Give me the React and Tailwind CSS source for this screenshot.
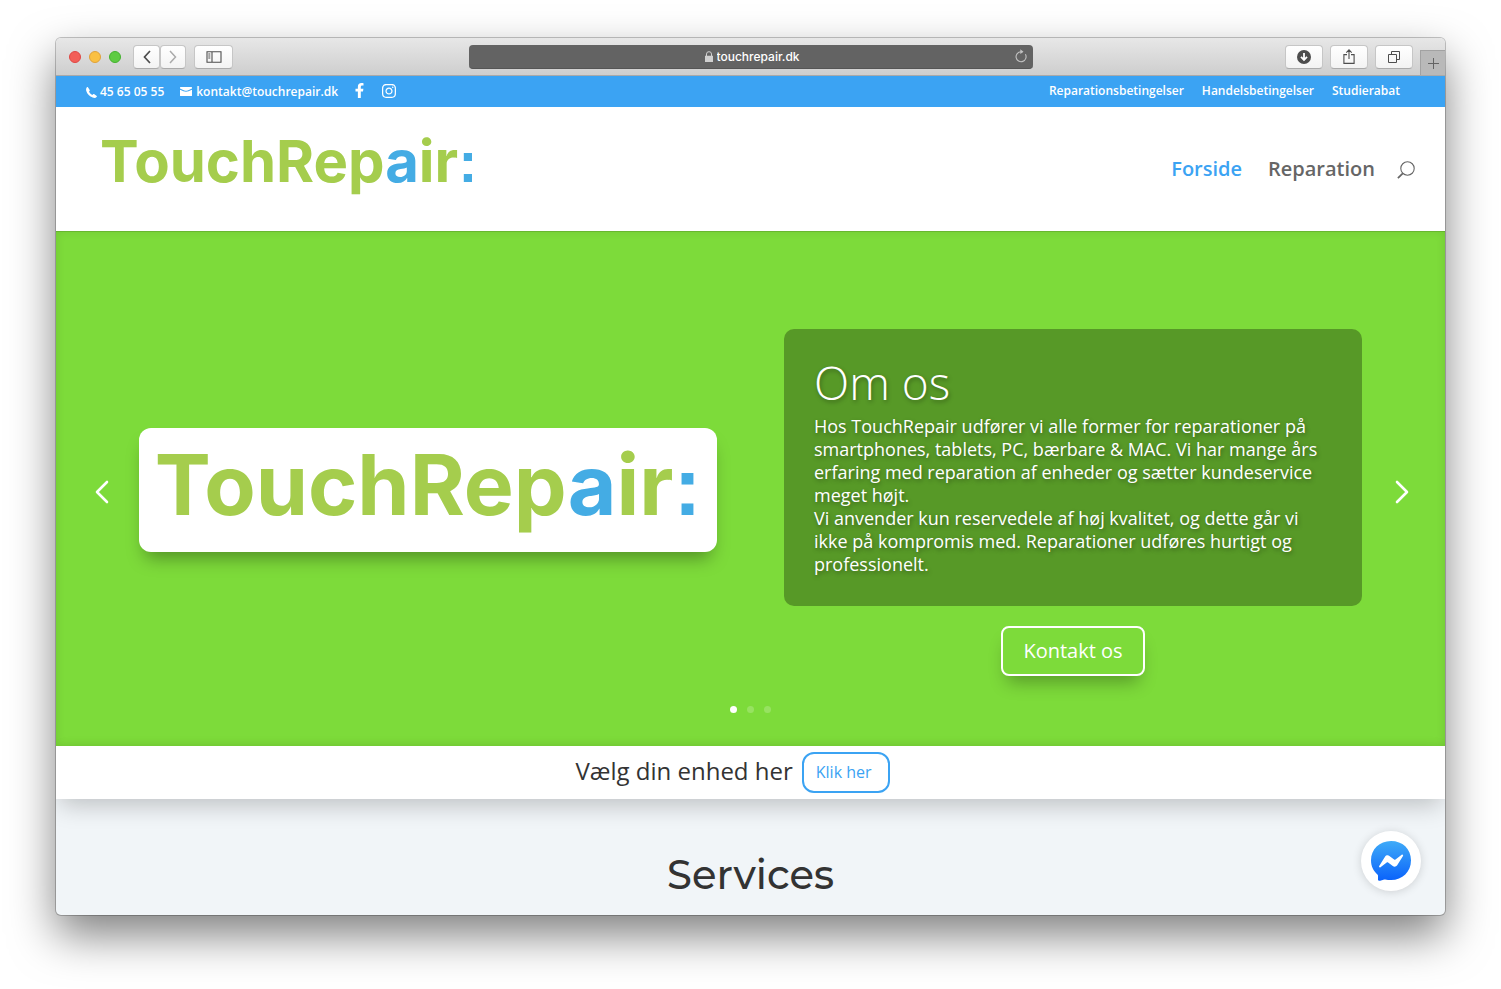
import { FaFacebookF, FaInstagram } from "react-icons/fa";

const toolButton =
  "flex h-6 items-center justify-center rounded-[4px] border border-[#c6c6c6] border-b-[#ababab] bg-gradient-to-b from-white to-[#f3f3f3] text-[#4d4d4d]";

function TitleBar() {
  return (
    <div className="grid h-[38px] grid-cols-[1fr_minmax(0,564px)_1fr] items-center border-b border-[#a9a9a9] bg-gradient-to-b from-[#e7e7e7] to-[#cecece]">
      <div className="flex items-center pl-[13px]">
        <div className="flex gap-2">
          <span className="size-3 rounded-full border border-[#df4744] bg-[#f25f58]" />
          <span className="size-3 rounded-full border border-[#e0a13a] bg-[#fac042]" />
          <span className="size-3 rounded-full border border-[#44b12f] bg-[#5ecb43]" />
        </div>
        <div className="ml-3 flex">
          <button aria-label="Tilbage" className={toolButton + " w-[27px]"}>
            <svg className="h-3.5 w-2" viewBox="0 0 8 14" fill="none" stroke="currentColor" strokeWidth="1.7"><path d="M7 1 1.5 7 7 13" /></svg>
          </button>
          <button aria-label="Frem" className={toolButton + " w-[26px]"}>
            <svg className="h-3.5 w-2 text-[#aaaaaa]" viewBox="0 0 8 14" fill="none" stroke="currentColor" strokeWidth="1.5"><path d="m1 1 5.500 6L1 13" /></svg>
          </button>
        </div>
        <button aria-label="Sidepanel" className={toolButton + " ml-2 w-[39px]"}>
          <svg className="h-3 w-4" viewBox="0 0 16 12" fill="none" stroke="currentColor" strokeWidth="1.100"><path d="M1 .7h14v10.600H1zM6 .7v10.600M2.300 3h2M2.300 5h2M2.300 7h2" /></svg>
        </button>
      </div>
      <div className="grid h-6 grid-cols-[1fr_auto_1fr] items-center rounded-[4px] border-b border-[#555555] bg-[#636363] pr-1.5 pl-2.5">
        <span />
        <label className="flex items-center gap-1">
          <svg aria-hidden="true" className="h-[11px] w-2" viewBox="0 0 8 11"><path d="M0 4.800h8V11H0z" fill="#d0d0d0" /><path d="M1.500 5V3a2.500 2.300 0 0 1 5 0v2" fill="none" stroke="#d0d0d0" strokeWidth="1" /></svg>
          <input readOnly aria-label="Adresse" value="touchrepair.dk" className="w-[84px] bg-transparent pt-0.5 font-['Inter',sans-serif] text-[12px] leading-5 font-medium text-white outline-none" />
        </label>
        <button aria-label="Genindlæs" className="justify-self-end">
          <svg className="h-[14px] w-3" viewBox="0 0 12 14" fill="none" stroke="#c2c2c2" strokeWidth="1.100"><path d="M10.400 5.200A5 5 0 1 1 6 2.700h1.400" /><path d="m5.300.300 3.200 2.400-3.200 2.300z" fill="#c2c2c2" stroke="none" /></svg>
        </button>
      </div>
      <div className="flex items-center justify-end gap-[7px] self-stretch">
        <button aria-label="Overførsler" className={toolButton + " w-[38px]"}>
          <svg className="size-3.5" viewBox="0 0 14 14"><circle cx="7" cy="7" r="7" fill="currentColor" /><path d="M7 3v6.500M4 6.800l3 3.200 3-3.200" fill="none" stroke="white" strokeWidth="1.800" /></svg>
        </button>
        <button aria-label="Del" className={toolButton + " w-[38px]"}>
          <svg className="h-[15px] w-3" viewBox="0 0 12 15" fill="none" stroke="currentColor" strokeWidth="1.100"><path d="M4 5.600H.9v8.800h10.200V5.600H8M6 10V1M3.300 3.600 6 .9l2.700 2.700" /></svg>
        </button>
        <button aria-label="Vis faner" className={toolButton + " w-[38px]"}>
          <svg className="size-3" viewBox="0 0 12 12" fill="none" stroke="currentColor" strokeWidth="1"><path d="M.5 3.500h8v8h-8zM3.500 3.500v-3h8v8h-3" /></svg>
        </button>
        <button aria-label="Ny fane" className="flex h-[25px] w-[25px] items-center justify-center self-end border-t border-l border-[#a2a2a2] bg-[#b9b9b9]">
          <svg className="size-[11px]" viewBox="0 0 11 11" stroke="#636363" strokeWidth="1"><path d="M5.500 0v11M0 5.500h11" /></svg>
        </button>
      </div>
    </div>
  );
}

function TopBar() {
  return (
    <div className="flex h-[31px] items-center justify-between bg-[#3ba3f3] pr-[45px] pl-[30px] text-[12px] leading-4 font-semibold text-white">
      <div className="flex items-center">
        <span className="flex items-center gap-[3px]">
          <svg className="mt-0.5 h-[11px] w-[11px]" viewBox="0 0 11 11" fill="currentColor"><path d="M1.900.2 3.700 3c.2.300.1.600-.1.900l-.6.700c.5 1.500 1.700 2.700 3.300 3.300l.8-.7c.3-.2.600-.3.900-.1L10.800 9c.2.200.2.500 0 .7-1 1.300-2.300 1.600-4.100.9C3.700 9.500 1.200 6.900.3 3.900-.2 2.200.1 1 1.200.1c.2-.2.500-.1.700.1Z" /></svg>
          45 65 05 55
        </span>
        <a href="#mail" className="ml-4 flex items-center gap-1">
          <svg className="h-[9px] w-3" viewBox="0 0 12 9" fill="currentColor"><path d="M.6 0h10.800q.6 0 .6.600v.9C9 3.200 7 3.800 6 3.800S3 3.200 0 1.500V.6Q0 0 .6 0ZM0 2.700c2.500 1.300 4.500 2 6 2s3.500-.7 6-2v5.700q0 .6-.6.600H.6Q0 9 0 8.400Z" /></svg>
          kontakt@touchrepair.dk
        </a>
        <a href="#facebook" aria-label="Facebook" className="ml-3.5 pb-0.5"><FaFacebookF className="size-[15px]" /></a>
        <a href="#instagram" aria-label="Instagram" className="ml-3.5 pb-0.5"><FaInstagram className="size-4" /></a>
      </div>
      <nav className="flex gap-[18px] pb-0.5">
        <a href="#reparationsbetingelser">Reparationsbetingelser</a>
        <a href="#handelsbetingelser">Handelsbetingelser</a>
        <a href="#studierabat">Studierabat</a>
      </nav>
    </div>
  );
}

function Wordmark({ className }) {
  return (
    <span className={"font-['Inter',sans-serif] font-bold whitespace-nowrap text-[#a5cd4d] " + className}>
      TouchRep<span className="text-[#44ace4]">a</span>ir<span className="font-['Liberation_Sans',sans-serif] text-[#44ace4]">:</span>
    </span>
  );
}

function Header() {
  return (
    <header className="flex h-[124px] items-center justify-between bg-white pr-[30px] pl-11">
      <a href="#forside" className="flex pb-4"><Wordmark className="text-[58px] leading-[58px]" /></a>
      <nav className="flex items-center gap-[26px] text-[20px] leading-7 font-semibold text-[#666666]">
        <a href="#forside" className="text-[#3ba3f3]">Forside</a>
        <a href="#reparation">Reparation</a>
        <button aria-label="Søg" className="-ml-1 pt-0.5">
          <svg className="size-[18px]" viewBox="0 0 18 18" fill="none" stroke="#666666" strokeWidth="1.100"><circle cx="10.500" cy="7.500" r="6.700" /><path d="M5.800 12.300.9 17.200" strokeWidth="1.700" /></svg>
        </button>
      </nav>
    </header>
  );
}

function Hero() {
  return (
    <section className="relative bg-[#7ddb3a] pt-[72px] pb-[70px] shadow-[inset_0_0_10px_rgba(0,0,0,0.1),inset_0_1px_0_rgba(0,0,0,0.12)]">
      <div className="grid grid-cols-2 items-center gap-[67px] px-[83px]">
        <div className="flex h-[124px] items-center justify-center rounded-xl bg-white pb-2 shadow-[0_12px_18px_-6px_rgba(0,0,0,0.35)]">
          <Wordmark className="text-[84px] leading-[84px]" />
        </div>
        <div className="flex flex-col items-center gap-5 pt-[26px] text-white">
          <div className="w-full rounded-[10px] bg-[#579927] p-[30px] [text-shadow:1px_2px_4px_rgba(0,0,0,0.35)]">
            <h1 className="pb-2.5 text-[46px] leading-[46px] font-light">Om os</h1>
            <p className="text-[18px] leading-[23px]">
              Hos TouchRepair udfører vi alle former for reparationer på smartphones, tablets, PC, bærbare &amp; MAC. Vi har mange års erfaring med reparation af enheder og sætter kundeservice meget højt.
              <br />
              Vi anvender kun reservedele af høj kvalitet, og dette går vi ikke på kompromis med. Reparationer udføres hurtigt og professionelt.
            </p>
          </div>
          <a href="#kontakt" className="flex h-[50px] items-center rounded-lg border-2 border-white bg-[#7ddb3a] px-5 text-[20px] leading-7 shadow-[0_12px_18px_-6px_rgba(0,0,0,0.3)]">Kontakt os</a>
        </div>
      </div>
      <button aria-label="Forrige" className="absolute inset-y-0 left-[39px] pt-1.5">
        <svg className="h-6 w-[14px]" viewBox="0 0 14 24" fill="none" stroke="white" strokeWidth="2.600" strokeLinecap="round" strokeLinejoin="round"><path d="M12 2 2 12l10 10" /></svg>
      </button>
      <button aria-label="Næste" className="absolute inset-y-0 right-9 pt-1.5">
        <svg className="h-6 w-[14px]" viewBox="0 0 14 24" fill="none" stroke="white" strokeWidth="2.600" strokeLinecap="round" strokeLinejoin="round"><path d="m2 2 10 10L2 22" /></svg>
      </button>
      <div className="absolute inset-x-0 bottom-[33px] flex justify-center gap-2.5">
        <button aria-label="Slide 1" className="size-[7px] rounded-full bg-white" />
        <button aria-label="Slide 2" className="size-[7px] rounded-full bg-white/20" />
        <button aria-label="Slide 3" className="size-[7px] rounded-full bg-white/20" />
      </div>
    </section>
  );
}

export default function App() {
  return (
    <div className="min-h-screen bg-white px-14 pt-[38px] pb-[74px] font-['Open_Sans',sans-serif]">
      <div className="relative overflow-hidden rounded-[5px] bg-[#f1f5f8] shadow-[0_0_0_1px_rgba(0,0,0,0.22),0_20px_45px_rgba(0,0,0,0.5)]">
        <TitleBar />
        <TopBar />
        <Header />
        <Hero />
        <section className="relative flex h-[53px] items-center justify-center gap-[9px] bg-white pr-9 shadow-[0_10px_24px_-4px_rgba(0,0,0,0.22)]">
          <h2 className="pb-1 text-[24px] leading-8 text-[#333333]">Vælg din enhed her</h2>
          <a href="#enheder" className="flex h-[41px] items-center rounded-xl border-2 border-[#3ba3f3] pr-4 pb-0.5 pl-3 text-[16px] leading-6 text-[#3ba3f3]">Klik her</a>
        </section>
        <section className="px-8 pt-[52px] pb-4 text-center">
          <h2 className="font-['Montserrat','Inter',sans-serif] text-[40px] leading-[48px] font-medium text-[#333333]">Services</h2>
        </section>
        <button aria-label="Messenger" className="absolute right-6 bottom-6 flex size-[60px] items-center justify-center rounded-full bg-white shadow-[0_1px_10px_rgba(0,0,0,0.15)]">
          <svg className="size-10" viewBox="0 0 40 40">
            <defs><linearGradient id="bubble" x1="0" y1="0" x2="0" y2="1"><stop offset="0" stopColor="#3fabf8" /><stop offset="1" stopColor="#0a62fb" /></linearGradient></defs>
            <path d="M20 0C8.500 0 0 8.300 0 19.300c0 5.800 2.400 10.800 6.400 14.200.4.300.6.800.6 1.300v3.600c0 1.100 1.200 1.800 2.200 1.300l4-1.200q.5-.2 1 0c1.800.4 3.800.6 5.800.6 11.500 0 20-8.300 20-19.800S31.500 0 20 0Z" fill="url(#bubble)" />
            <path d="m8.200 24.900 5.800-9.200c1-1.500 3-1.900 4.400-.8l4.700 3.500c.4.300 1 .3 1.400 0l6.200-4.700c.8-.6 1.900.4 1.300 1.300l-5.800 9.200c-1 1.500-3 1.900-4.400.8l-4.700-3.500c-.4-.3-1-.3-1.400 0l-6.200 4.700c-.8.600-1.900-.4-1.300-1.300Z" fill="white" />
          </svg>
        </button>
      </div>
    </div>
  );
}
